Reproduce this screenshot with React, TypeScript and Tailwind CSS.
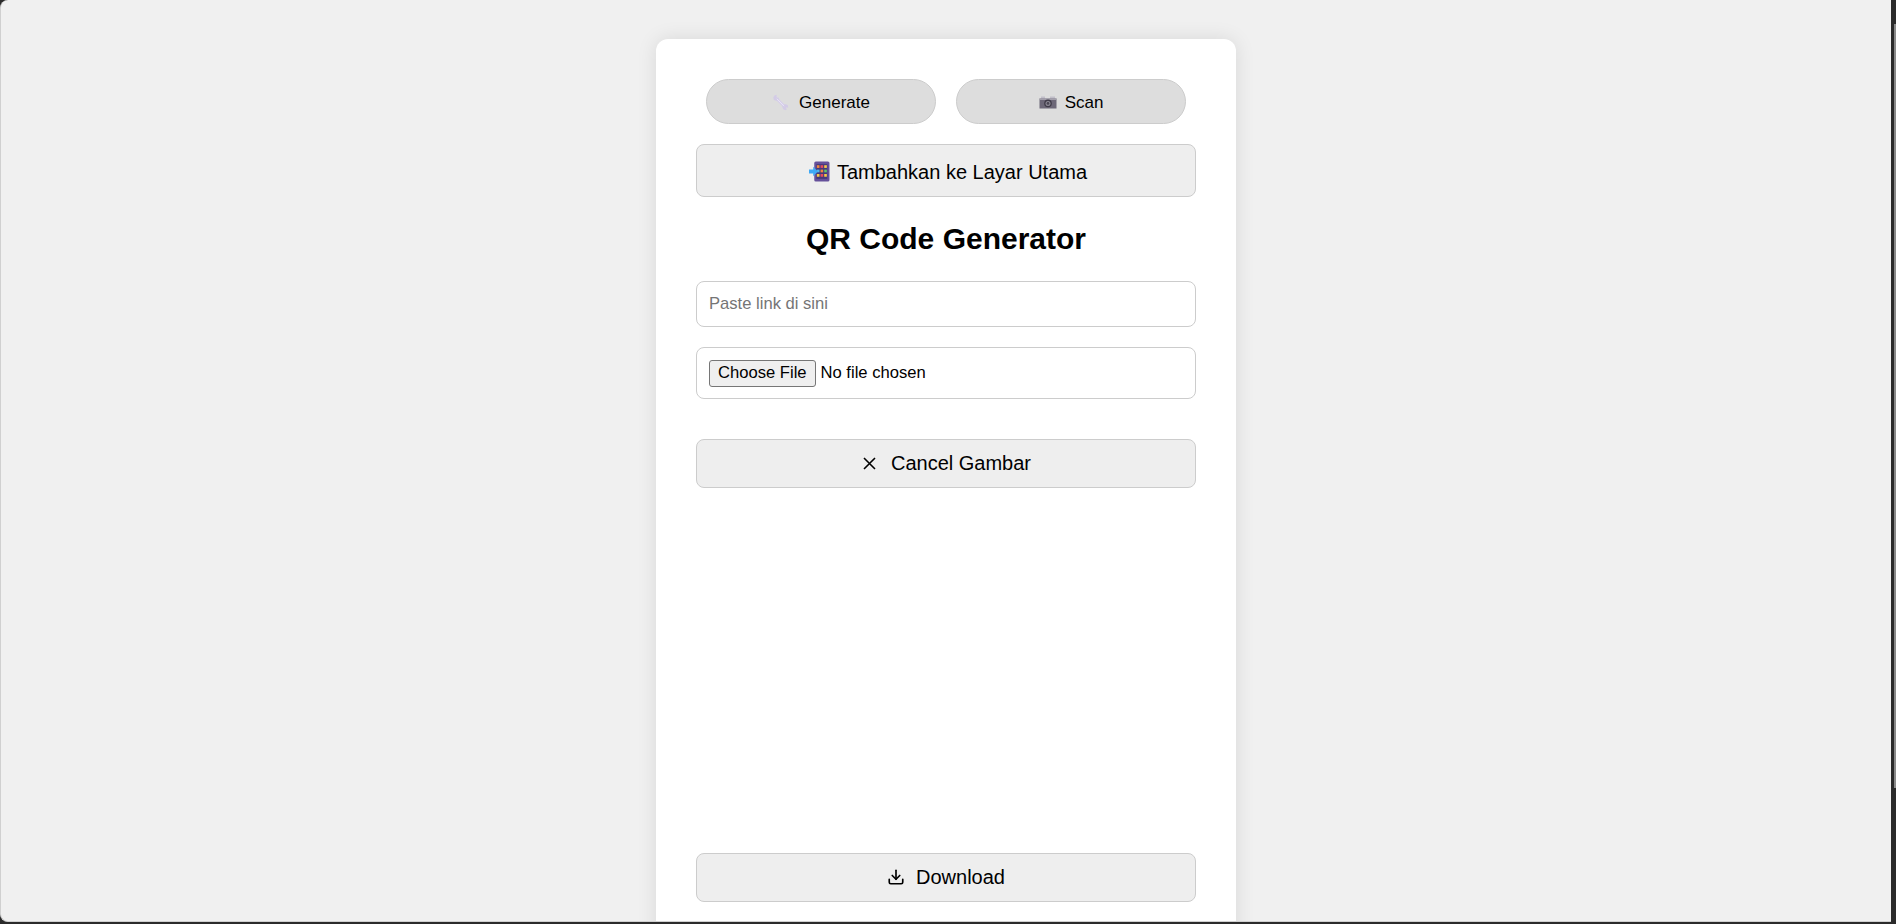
import { Download } from 'lucide-react';

function WrenchEmoji() {
  return (
    <svg viewBox="0 0 20 20" className="h-[17px] w-[17px] shrink-0" fill="none" strokeLinecap="round">
      <path d="M4.5 4.5 L15.5 15.5" stroke="#d6ceea" strokeWidth="3.2" />
      <path d="M5.6 1 L3.2 1.6 L1.4 4 L2.2 7 L5 8 L7.6 6.8 L8 4 L6.6 4.8 L5 4.2 Z" fill="#d3cbe6" />
      <path d="M12 15 L13.2 18 L16 19 L17.6 18 L16 16.4 L17.2 15.4 L19 16.4 L18.8 13.6 L16.6 12 L14 12.4 Z" fill="#d3cbe6" />
      <path d="M6 6 L14 14" stroke="#ebe7f5" strokeWidth="1" />
    </svg>
  );
}

function CameraEmoji() {
  return (
    <svg viewBox="0 0 18 13" className="h-[13px] w-[18px] shrink-0">
      <rect x="2" y="0.5" width="4" height="2.5" fill="#c2bfc9" />
      <rect x="11" y="0.5" width="5" height="2.5" fill="#c2bfc9" />
      <rect x="0.5" y="2.5" width="17" height="10" fill="#6d6878" />
      <rect x="0.5" y="2.5" width="17" height="1.4" fill="#a9a6b1" />
      <circle cx="9" cy="7.4" r="3.8" fill="#3f3b48" />
      <circle cx="9" cy="7.4" r="2.5" fill="#8d8a96" />
      <circle cx="9" cy="7.4" r="1.4" fill="#4a4653" />
    </svg>
  );
}

function AddToHomeEmoji() {
  return (
    <svg viewBox="0 0 20 20" className="h-[21px] w-[21px] shrink-0">
      <rect x="5" y="0.5" width="14.5" height="19" rx="1.5" fill="#65509a" />
      <rect x="7" y="3" width="10.5" height="14" fill="#46397a" />
      <rect x="7.5" y="4" width="2.5" height="2.6" fill="#f0883e" />
      <rect x="11" y="4" width="2.5" height="2.6" fill="#e84a5f" />
      <rect x="14.5" y="4" width="2.5" height="2.6" fill="#f7c948" />
      <rect x="7.5" y="8.2" width="2.5" height="2.6" fill="#4db6e8" />
      <rect x="11" y="8.2" width="2.5" height="2.6" fill="#f0883e" />
      <rect x="14.5" y="8.2" width="2.5" height="2.6" fill="#5cc46b" />
      <rect x="7.5" y="12.4" width="2.5" height="2.6" fill="#f7c948" />
      <rect x="11" y="12.4" width="2.5" height="2.6" fill="#e84a5f" />
      <rect x="14.5" y="12.4" width="2.5" height="2.6" fill="#f7c948" />
      <path d="M0 8 H4 V5.5 L8.5 10 L4 14.5 V12 H0 Z" fill="#3fa9f5" />
    </svg>
  );
}

function CrossIcon() {
  return (
    <svg viewBox="0 0 13 13" className="h-[13px] w-[13px] shrink-0" fill="none" stroke="black" strokeWidth="1.6">
      <path d="M1 1 L12 12 M12 1 L1 12" />
    </svg>
  );
}

function ActionButton({ gap, children }: { gap: string; children: React.ReactNode }) {
  return (
    <button className={`flex h-[49px] w-full items-center justify-center rounded-lg border border-[#cccccc] bg-[#eeeeee] pb-px text-[20px] text-black ${gap}`}>
      {children}
    </button>
  );
}

function TabButton({ gap, children }: { gap: string; children: React.ReactNode }) {
  return (
    <button className={`flex h-[45px] w-[230px] items-center justify-center rounded-[25px] border border-[#cccccc] bg-[#dddddd] pt-[2px] text-[17px] text-black ${gap}`}>
      {children}
    </button>
  );
}

export default function App() {
  return (
    <div className="relative h-screen w-full overflow-hidden bg-[#2b2b2b] pr-[5px] pb-[2px] font-['Liberation_Sans',Arial,sans-serif]">
      <div className="h-full overflow-hidden rounded-l-lg border-b border-l border-[#d0d0d0] bg-[#f0f0f0] pt-[39px]">
        <div className="mx-auto flex min-h-[1000px] w-[580px] flex-col rounded-t-xl bg-white px-10 pt-10 shadow-[0_0_20px_rgba(0,0,0,0.1)]">
          <div className="flex justify-center gap-5">
            <TabButton gap="gap-[10px]">
              <WrenchEmoji />
              Generate
            </TabButton>
            <TabButton gap="gap-2">
              <CameraEmoji />
              Scan
            </TabButton>
          </div>

          <button className="mt-5 flex h-[53px] w-full items-center justify-center gap-[7px] rounded-lg border border-[#cccccc] bg-[#eeeeee] pt-[2px] pl-1 text-[20px] text-black">
            <AddToHomeEmoji />
            Tambahkan ke Layar Utama
          </button>

          <h2 className="mt-[25px] text-center text-[30px] leading-[34px] font-bold text-black">QR Code Generator</h2>

          <input
            type="text"
            placeholder="Paste link di sini"
            className="mt-[25px] h-[46px] w-full rounded-lg border border-[#cccccc] bg-white px-3 text-[16.6px] text-black placeholder:text-[#757575]"
          />

          <div className="mt-5 flex h-[52px] items-center rounded-lg border border-[#cccccc] bg-white px-3">
            <input type="file" className="text-[16.6px] text-black file:mr-[5px] file:h-[27px] file:rounded-[3px] file:border file:border-[#767676] file:bg-[#efefef] file:px-2 file:text-[16.6px] file:text-black" />
          </div>

          <div className="mt-10">
            <ActionButton gap="gap-[15px] pl-[2px]">
              <CrossIcon />
              Cancel Gambar
            </ActionButton>
          </div>

          <div className="mt-[365px]">
            <ActionButton gap="gap-[11px]">
              <Download className="h-[18px] w-[18px]" strokeWidth={2.2} />
              Download
            </ActionButton>
          </div>
        </div>
      </div>
      <div className="absolute top-[24px] right-0 h-[764px] w-[2px] bg-[#8a8a8a]" />
    </div>
  );
}
